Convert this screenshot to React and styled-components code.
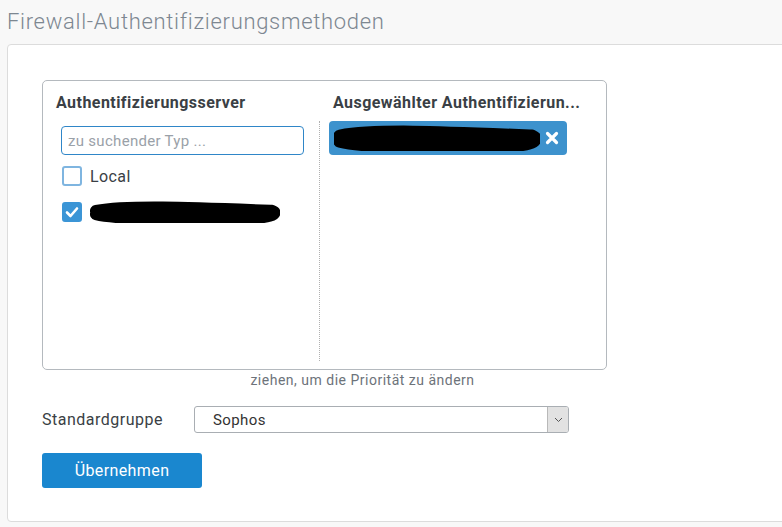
import styled, { createGlobalStyle } from "styled-components";

const Global = createGlobalStyle`
  html, body { margin: 0; padding: 0; background: #f8f8f8; }
  body { font-family: Roboto, "Liberation Sans", sans-serif; width: 782px; height: 527px; overflow: hidden; }
`;

const Page = styled.div`
  padding: 8px 0 0 7px;
`;

const Title = styled.h1`
  margin: 0;
  height: 36px;
  font-size: 22px;
  font-weight: 300;
  color: #7d8791;
  line-height: 28px;
  letter-spacing: 0.7px;
`;

const Card = styled.div`
  width: 800px;
  height: 478px;
  box-sizing: border-box;
  background: #fff;
  border: 1px solid #dcdcdc;
  border-radius: 4px;
  padding: 35px 0 0 34px;
`;

const Picker = styled.div`
  width: 565px;
  height: 290px;
  box-sizing: border-box;
  border: 1px solid #b4b9be;
  border-radius: 5px;
  display: grid;
  grid-template-columns: 276px 1fr;
  padding-bottom: 8px;
`;

const Column = styled.div`
  display: flex;
  flex-direction: column;
  padding: ${(p) => p.$pad};
  border-left: ${(p) => (p.$divider ? "1px dotted #b0b0b0" : "none")};
  margin-top: ${(p) => (p.$divider ? "8px" : "0")};
  flex: ${(p) => (p.$divider ? 1 : "initial")};
  min-width: 0;
`;

const Header = styled.div`
  font-size: 16px;
  font-weight: 700;
  color: #3a3f45;
  height: 20px;
  line-height: 20px;
  letter-spacing: 0.45px;
  margin-top: 12px;
  padding: ${(p) => p.$pad || "0"};
  white-space: nowrap;
`;

const Search = styled.input`
  box-sizing: border-box;
  width: 243px;
  height: 29px;
  margin: 13px 0 0 5px;
  border: 1px solid #2f86c8;
  border-radius: 4px;
  padding: 0 6px;
  font-family: inherit;
  font-size: 15px;
  letter-spacing: 0.3px;
  color: #333;
  outline: none;
  &::placeholder { color: #9aa1a8; }
`;

const Option = styled.label`
  display: flex;
  align-items: center;
  gap: 8px;
  height: 20px;
  margin: ${(p) => p.$margin};
  font-size: 16px;
  letter-spacing: 0.4px;
  color: #3a3f45;
`;

const Box = styled.span`
  box-sizing: border-box;
  width: 20px;
  height: 20px;
  border-radius: 3px;
  border: 2px solid ${(p) => (p.$checked ? "#3b95d6" : "#7fb5e0")};
  background: ${(p) => (p.$checked ? "#3b95d6" : "#fff")};
  display: flex;
  align-items: center;
  justify-content: center;
`;

const Chip = styled.div`
  box-sizing: border-box;
  width: 238px;
  height: 34px;
  margin: 0 0 0 9px;
  background: #3d92cd;
  border-radius: 4px;
  display: flex;
  align-items: center;
  padding: 0 8px 0 5px;
  justify-content: space-between;
`;

const Hint = styled.div`
  width: 565px;
  box-sizing: border-box;
  padding-left: 76px;
  text-align: center;
  font-size: 14px;
  letter-spacing: 0.5px;
  color: #6d737a;
  margin-top: 1px;
  height: 20px;
  line-height: 18px;
`;

const Row = styled.div`
  display: flex;
  align-items: center;
  margin-top: 15px;
`;

const Label = styled.div`
  width: 152px;
  font-size: 16px;
  letter-spacing: 0.5px;
  color: #3a3f45;
`;

const Select = styled.div`
  box-sizing: border-box;
  width: 375px;
  height: 27px;
  border: 1px solid #a9aeb3;
  border-radius: 3px;
  display: flex;
  align-items: center;
  justify-content: space-between;
  font-size: 15px;
  letter-spacing: 0.4px;
  color: #333;
  padding-left: 18px;
  overflow: hidden;
`;

const Arrow = styled.span`
  width: 20px;
  height: 100%;
  background: #e2e2e2;
  border-left: 1px solid #b9b9b9;
  display: flex;
  align-items: center;
  justify-content: center;
`;

const Button = styled.button`
  margin-top: 20px;
  width: 160px;
  height: 35px;
  border: none;
  border-radius: 3px;
  background: #1a87cf;
  color: #fff;
  font-family: inherit;
  font-size: 16px;
  letter-spacing: 0.4px;
  cursor: pointer;
`;

const Scribble = ({ width, height }) => (
  <svg width={width} height={height} viewBox={`0 0 ${width} ${height}`}>
    <path
      d={`M6 ${height * 0.45} C ${width * 0.2} ${height * 0.2}, ${width * 0.5} ${height * 0.3}, ${width - 8} ${height * 0.45} C ${width - 2} ${height * 0.55}, ${width - 4} ${height * 0.8}, ${width * 0.7} ${height * 0.85} C ${width * 0.4} ${height * 0.75}, ${width * 0.15} ${height * 0.85}, 6 ${height * 0.6}`}
      fill="#000"
      stroke="#000"
      strokeWidth={height * 0.55}
      strokeLinecap="round"
      strokeLinejoin="round"
    />
  </svg>
);

export default function App() {
  return (
    <Page>
      <Global />
      <Title>Firewall-Authentifizierungsmethoden</Title>
      <Card>
        <Picker>
          <Column $pad="0 0 0 13px">
            <Header>Authentifizierungsserver</Header>
            <Search placeholder="zu suchender Typ ..." />
            <Option $margin="11px 0 0 6px">
              <Box />
              Local
            </Option>
            <Option $margin="16px 0 0 6px">
              <Box $checked>
                <svg width="14" height="12" viewBox="0 0 14 12">
                  <path d="M2 6.5 L5.5 10 L12 2.5" fill="none" stroke="#fff" strokeWidth="2.6" strokeLinecap="round" strokeLinejoin="round" />
                </svg>
              </Box>
              <Scribble width={190} height={22} />
            </Option>
          </Column>
          <Column $pad="0">
            <Header $pad="0 0 0 14px">Ausgewählter Authentifizierun...</Header>
            <Column $divider $pad="0">
              <Chip>
                <Scribble width={206} height={26} />
                <svg width="14" height="14" viewBox="0 0 14 14">
                  <path d="M2.5 2.5 L11.5 11.5 M11.5 2.5 L2.5 11.5" stroke="#fff" strokeWidth="3.2" strokeLinecap="round" />
                </svg>
              </Chip>
            </Column>
          </Column>
        </Picker>
        <Hint>ziehen, um die Priorität zu ändern</Hint>
        <Row>
          <Label>Standardgruppe</Label>
          <Select>
            Sophos
            <Arrow>
              <svg width="9" height="6" viewBox="0 0 9 6">
                <path d="M1 1 L4.5 4.5 L8 1" fill="none" stroke="#555" strokeWidth="1" />
              </svg>
            </Arrow>
          </Select>
        </Row>
        <Button>Übernehmen</Button>
      </Card>
    </Page>
  );
}
